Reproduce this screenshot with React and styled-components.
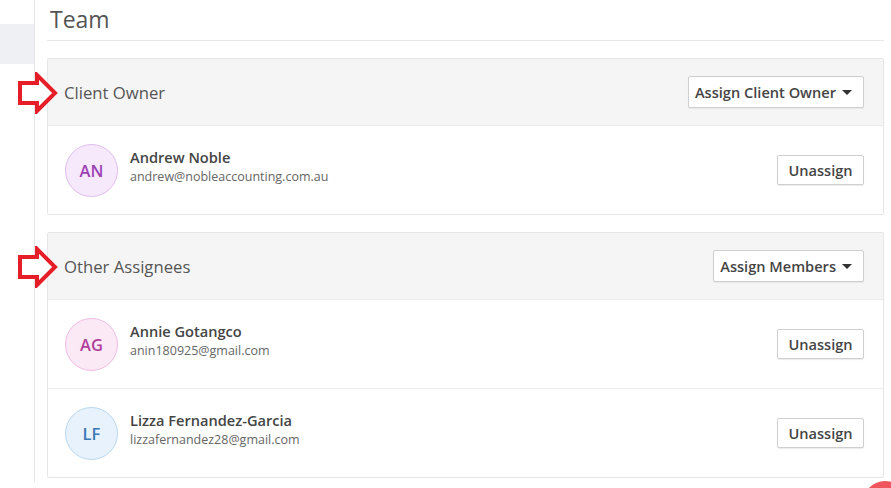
import styled, { createGlobalStyle } from "styled-components";

const GlobalStyle = createGlobalStyle`
  html, body {
    margin: 0;
    padding: 0;
    background: #fff;
    font-family: "Open Sans", "Liberation Sans", Arial, sans-serif;
    color: #444;
  }
`;

const Page = styled.div`
  display: flex;
  width: 891px;
  height: 488px;
  overflow: hidden;
  position: relative;
`;

const Sidebar = styled.aside`
  width: 35px;
  flex-shrink: 0;
  border-right: 1px solid #e4e4e4;
  height: 482px;
  padding-top: 24px;
  box-sizing: border-box;
`;

const SideItem = styled.div`
  height: 40px;
  background: #eef0f3;
`;

const Main = styled.main`
  flex: 1;
  padding: 0 7px 0 12px;
`;

const Title = styled.h2`
  margin: 0;
  height: 41px;
  box-sizing: border-box;
  padding: 5px 0 0 3px;
  font-size: 23px;
  font-weight: 400;
  color: #555;
  border-bottom: 1px solid #e8e8e8;
  line-height: 28px;
`;

const Card = styled.section`
  margin-top: ${(p) => p.$gap}px;
  border: 1px solid #e6e6e6;
  border-radius: 2px;
  background: #fff;
`;

const CardHeader = styled.div`
  position: relative;
  height: 66px;
  display: flex;
  align-items: center;
  justify-content: space-between;
  padding: 0 19px 0 16px;
  background: #f5f5f5;
  border-bottom: 1px solid #ebebeb;
`;

const HeaderTitle = styled.span`
  font-size: 16.7px;
  color: #555;
`;

const Pointer = styled.svg`
  position: absolute;
  left: -31px;
  top: 13px;
`;

const Dropdown = styled.button`
  display: flex;
  align-items: center;
  gap: 6px;
  height: 32px;
  padding: 0 11px 0 6px;
  background: #fff;
  border: 1px solid #cfcfcf;
  border-radius: 2px;
  font-family: inherit;
  font-size: 14.6px;
  font-weight: 600;
  color: #444;
  box-shadow: 0 1px 1px rgba(0, 0, 0, 0.06);
`;

const Caret = styled.span`
  width: 0;
  height: 0;
  border-left: 5px solid transparent;
  border-right: 5px solid transparent;
  border-top: 5px solid #333;
`;

const Row = styled.div`
  height: 88px;
  display: flex;
  align-items: center;
  padding: 0 19px 0 17px;
  & + & {
    border-top: 1px solid #ececec;
  }
`;

const Avatar = styled.div`
  width: 53px;
  height: 53px;
  border-radius: 50%;
  box-sizing: border-box;
  display: flex;
  align-items: center;
  justify-content: center;
  font-size: 16.5px;
  font-weight: 600;
  background: ${(p) => p.$bg};
  border: 1px solid ${(p) => p.$border};
  color: ${(p) => p.$color};
`;

const Info = styled.div`
  flex: 1;
  margin-left: 12px;
  margin-top: -7px;
`;

const Name = styled.div`
  font-size: 14.6px;
  font-weight: 600;
  color: #444;
  line-height: 20px;
`;

const Email = styled.div`
  font-size: 12.5px;
  color: #666;
  line-height: 20px;
`;

const Unassign = styled.button`
  width: 87px;
  height: 30px;
  padding: 0;
  background: #fff;
  border: 1px solid #cfcfcf;
  border-radius: 2px;
  font-family: inherit;
  font-size: 14.6px;
  font-weight: 600;
  color: #444;
  box-shadow: 0 1px 1px rgba(0, 0, 0, 0.08);
`;

const Fab = styled.div`
  position: absolute;
  left: 863px;
  top: 481px;
  width: 44px;
  height: 44px;
  border-radius: 50%;
  background: #f0545c;
`;

const palettes = {
  purple: { bg: "#f6e9fb", border: "#dfbdee", color: "#9c40b4" },
  pink: { bg: "#fce9f6", border: "#efbbe1", color: "#b13f99" },
  blue: { bg: "#e7f2fc", border: "#b9d7f0", color: "#3b78b5" },
};

function Arrow() {
  return (
    <Pointer width="42" height="42" viewBox="0 0 42 42">
      <path
        d="M3 11 H20 V3 L38 21 L20 39 V31 H3 Z"
        fill="#fff"
        stroke="#e61e28"
        strokeWidth="4"
        strokeLinejoin="miter"
      />
    </Pointer>
  );
}

function Member({ initials, name, email, tone }) {
  const c = palettes[tone];
  return (
    <Row>
      <Avatar $bg={c.bg} $border={c.border} $color={c.color}>
        {initials}
      </Avatar>
      <Info>
        <Name>{name}</Name>
        <Email>{email}</Email>
      </Info>
      <Unassign>Unassign</Unassign>
    </Row>
  );
}

export default function App() {
  return (
    <>
      <GlobalStyle />
      <Page>
        <Sidebar>
          <SideItem />
        </Sidebar>
        <Main>
          <Title>Team</Title>
          <Card $gap={17}>
            <CardHeader>
              <Arrow />
              <HeaderTitle>Client Owner</HeaderTitle>
              <Dropdown>
                Assign Client Owner <Caret />
              </Dropdown>
            </CardHeader>
            <Member
              initials="AN"
              name="Andrew Noble"
              email="andrew@nobleaccounting.com.au"
              tone="purple"
            />
          </Card>
          <Card $gap={17}>
            <CardHeader>
              <Arrow />
              <HeaderTitle>Other Assignees</HeaderTitle>
              <Dropdown>
                Assign Members <Caret />
              </Dropdown>
            </CardHeader>
            <Member
              initials="AG"
              name="Annie Gotangco"
              email="anin180925@gmail.com"
              tone="pink"
            />
            <Member
              initials="LF"
              name="Lizza Fernandez-Garcia"
              email="lizzafernandez28@gmail.com"
              tone="blue"
            />
          </Card>
        </Main>
        <Fab />
      </Page>
    </>
  );
}
